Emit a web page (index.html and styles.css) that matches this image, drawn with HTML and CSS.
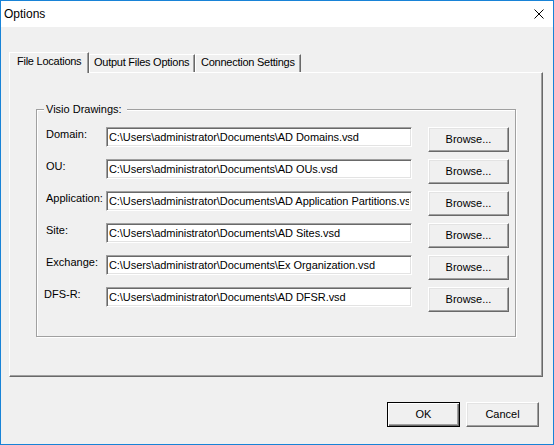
FILE: index.html
```html
<!DOCTYPE html>
<html>
<head>
<meta charset="utf-8">
<title>Options</title>
<link rel="stylesheet" href="styles.css">
</head>
<body>
<div class="window">
  <div class="titlebar">
    <span class="title">Options</span>
    <svg class="close" width="10" height="10" viewBox="0 0 10 10"><path d="M0.5 0.5L9.5 9.5M9.5 0.5L0.5 9.5" stroke="#000" stroke-width="1" fill="none"/></svg>
  </div>
  <div class="client">
    <div class="tabs">
      <div class="tab tab-active">File Locations</div>
      <div class="tab tab-output">Output Files Options</div>
      <div class="tab tab-conn">Connection Settings</div>
    </div>
    <div class="panel">
      <div class="group">
        <div class="group-title">Visio Drawings:</div>
        <div class="rows">
          <div class="row"><label class="label">Domain:</label><input class="field" type="text" value="C:\Users\administrator\Documents\AD Domains.vsd" readonly><button class="btn browse">Browse...</button></div>
          <div class="row"><label class="label">OU:</label><input class="field" type="text" value="C:\Users\administrator\Documents\AD OUs.vsd" readonly><button class="btn browse">Browse...</button></div>
          <div class="row"><label class="label">Application:</label><input class="field" type="text" value="C:\Users\administrator\Documents\AD Application Partitions.vsd" readonly><button class="btn browse">Browse...</button></div>
          <div class="row"><label class="label">Site:</label><input class="field" type="text" value="C:\Users\administrator\Documents\AD Sites.vsd" readonly><button class="btn browse">Browse...</button></div>
          <div class="row"><label class="label">Exchange:</label><input class="field" type="text" value="C:\Users\administrator\Documents\Ex Organization.vsd" readonly><button class="btn browse">Browse...</button></div>
          <div class="row"><label class="label label-dfs">DFS-R:</label><input class="field" type="text" value="C:\Users\administrator\Documents\AD DFSR.vsd" readonly><button class="btn browse">Browse...</button></div>
        </div>
      </div>
    </div>
    <div class="actions">
      <button class="btn action btn-default">OK</button>
      <button class="btn action">Cancel</button>
    </div>
  </div>
</div>
</body>
</html>
```
FILE: styles.css
```css
* { box-sizing: border-box; }
html, body { margin: 0; padding: 0; }
body {
  width: 554px;
  height: 445px;
  overflow: hidden;
  background: #f0f0f0;
  font-family: "Liberation Sans", Arial, sans-serif;
  font-size: 11px;
  color: #000;
}
.window {
  width: 554px;
  height: 445px;
  border: 1px solid #1883d7;
  background: #f0f0f0;
  display: flex;
  flex-direction: column;
}
.titlebar {
  height: 26px;
  flex: none;
  background: #fff;
  display: flex;
  align-items: center;
  justify-content: space-between;
  padding: 0 9px 0 3px;
}
.title { font-size: 12px; line-height: 16px; }
.close { display: block; }
.client {
  flex: 1;
  display: flex;
  flex-direction: column;
  padding: 25px 0 0 8px;
}
.tabs {
  display: flex;
  align-items: flex-end;
  height: 20px;
  position: relative;
  z-index: 1;
}
.tab {
  background: #f0f0f0;
  border-left: 1px solid #fff;
  border-top: 1px solid #fff;
  border-right: 1px solid #696969;
  box-shadow: inset -1px 0 0 #a0a0a0;
  line-height: 13px;
  letter-spacing: -0.25px;
  white-space: nowrap;
  overflow: hidden;
  height: 18px;
  padding-top: 1px;
}
.tab-active {
  width: 80px;
  height: 21px;
  margin-bottom: -1px;
  padding: 2px 0 0 7px;
}
.tab-output { width: 106px; padding-left: 4px; }
.tab-conn { width: 106px; padding-left: 5px; }
.panel {
  width: 534px;
  height: 305px;
  border-top: 1px solid #fff;
  border-left: 1px solid #fff;
  border-right: 1px solid #696969;
  border-bottom: 1px solid #696969;
  box-shadow: inset -1px -1px 0 #a0a0a0;
  padding: 36px 0 0 26px;
}
.group {
  width: 480px;
  border: 1px solid #a0a0a0;
  box-shadow: 1px 1px 0 #fff, inset 1px 1px 0 #fff;
  padding: 0 0 24px 9px;
}
.group-title {
  width: max-content;
  margin: -7px 0 0 -2px;
  padding: 0 5px 0 2px;
  line-height: 13px;
  background: #f0f0f0;
}
.rows {
  margin-top: 11px;
  display: flex;
  flex-direction: column;
  gap: 7px;
}
.row {
  display: flex;
  align-items: flex-start;
  height: 25px;
}
.label {
  width: 60px;
  flex: none;
  line-height: 13px;
  padding-top: 1px;
}
.label-dfs { width: 62px; margin-left: -2px; }
.field {
  width: 306px;
  height: 20px;
  flex: none;
  margin: 0;
  padding: 0 2px;
  font-family: "Liberation Sans", Arial, sans-serif;
  font-size: 11px;
  letter-spacing: -0.07px;
  color: #000;
  background: #fff;
  border: 1px solid;
  border-color: #a0a0a0 #fff #fff #a0a0a0;
  box-shadow: inset 1px 1px 0 #696969, inset -1px -1px 0 #e3e3e3;
  outline: none;
}
.btn {
  margin: 0;
  padding: 0 0 1px;
  font-family: "Liberation Sans", Arial, sans-serif;
  font-size: 11px;
  color: #000;
  background: #f0f0f0;
  border: 1px solid;
  border-color: #fff #696969 #696969 #fff;
  box-shadow: inset -1px -1px 0 #a0a0a0, inset 1px 1px 0 #e3e3e3;
}
.browse {
  margin-left: 16px;
  width: 81px;
  height: 25px;
  flex: none;
}
.actions {
  display: flex;
  justify-content: flex-end;
  gap: 6px;
  margin-top: 25px;
  padding-right: 14px;
}
.action { width: 73px; height: 25px; }
.btn-default {
  border-color: #000;
  box-shadow: inset 1px 1px 0 #fff, inset -1px -1px 0 #696969, inset -2px -2px 0 #a0a0a0;
}
```
